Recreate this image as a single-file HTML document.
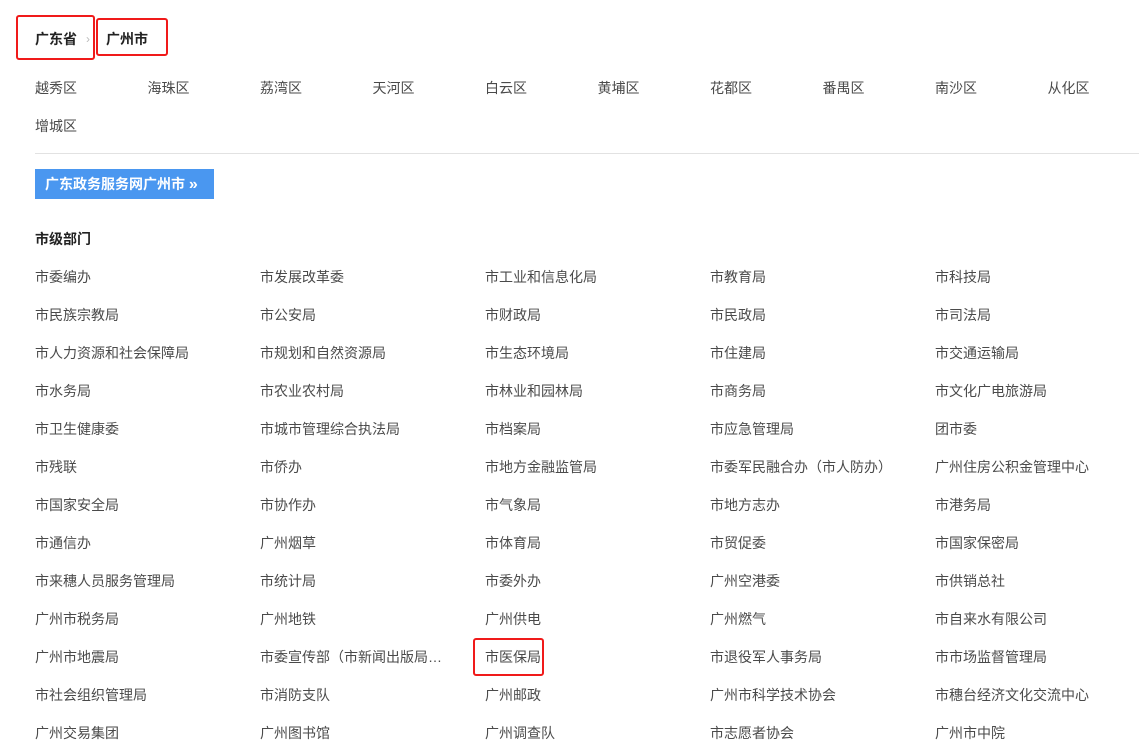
<!DOCTYPE html>
<html><head><meta charset="utf-8"><style>
body{margin:0;width:1144px;height:749px;background:#fff;font-family:"Liberation Sans","Noto Sans CJK SC",sans-serif;position:relative;overflow:hidden;color:#4a4a4a}
.a{position:absolute;font-size:14px;line-height:20px;white-space:nowrap}
.b{font-weight:bold;color:#222;font-size:14px}
.box{position:absolute;border:2px solid #f01a1a;border-radius:3px;box-sizing:border-box}
</style></head><body>
<div class="box" style="left:16px;top:15px;width:79px;height:45px"></div>
<div class="box" style="left:96px;top:18px;width:72px;height:38px"></div>
<div class="box" style="left:473px;top:638px;width:71px;height:38px"></div>
<div class="a b" style="left:35px;top:29px">广东省</div>
<div class="a" style="left:86px;top:29px;color:#bbb;font-size:12px">›</div>
<div class="a b" style="left:106px;top:29px">广州市</div>
<div id="d"></div>
<div style="position:absolute;left:35px;top:153px;width:1104px;height:1px;background:#e2e2e2"></div>
<div style="position:absolute;left:35px;top:169px;width:179px;height:30px;background:#4a97f0;color:#fff;font-weight:bold;font-size:14px;line-height:30px;box-sizing:border-box;padding-left:10px;white-space:nowrap">广东政务服务网广州市 <b style="font-size:16px">»</b></div>
<div class="a b" style="left:35px;top:229px">市级部门</div>
<div id="g"></div>
<script>
var d=["越秀区","海珠区","荔湾区","天河区","白云区","黄埔区","花都区","番禺区","南沙区","从化区","增城区"],h="";
d.forEach(function(t,i){h+='<div class="a" style="left:'+(35+(i%10)*112.5)+'px;top:'+(78+Math.floor(i/10)*38)+'px">'+t+'</div>'});
document.getElementById("d").outerHTML=h;
var g=["市委编办","市发展改革委","市工业和信息化局","市教育局","市科技局","市民族宗教局","市公安局","市财政局","市民政局","市司法局","市人力资源和社会保障局","市规划和自然资源局","市生态环境局","市住建局","市交通运输局","市水务局","市农业农村局","市林业和园林局","市商务局","市文化广电旅游局","市卫生健康委","市城市管理综合执法局","市档案局","市应急管理局","团市委","市残联","市侨办","市地方金融监管局","市委军民融合办（市人防办）","广州住房公积金管理中心","市国家安全局","市协作办","市气象局","市地方志办","市港务局","市通信办","广州烟草","市体育局","市贸促委","市国家保密局","市来穗人员服务管理局","市统计局","市委外办","广州空港委","市供销总社","广州市税务局","广州地铁","广州供电","广州燃气","市自来水有限公司","广州市地震局","市委宣传部（市新闻出版局…","市医保局","市退役军人事务局","市市场监督管理局","市社会组织管理局","市消防支队","广州邮政","广州市科学技术协会","市穗台经济文化交流中心","广州交易集团","广州图书馆","广州调查队","市志愿者协会","广州市中院"];h="";
g.forEach(function(t,i){h+='<div class="a" style="left:'+(35+(i%5)*225)+'px;top:'+(267+Math.floor(i/5)*38)+'px">'+t+'</div>'});
document.getElementById("g").outerHTML=h;
</script>
</body></html>
